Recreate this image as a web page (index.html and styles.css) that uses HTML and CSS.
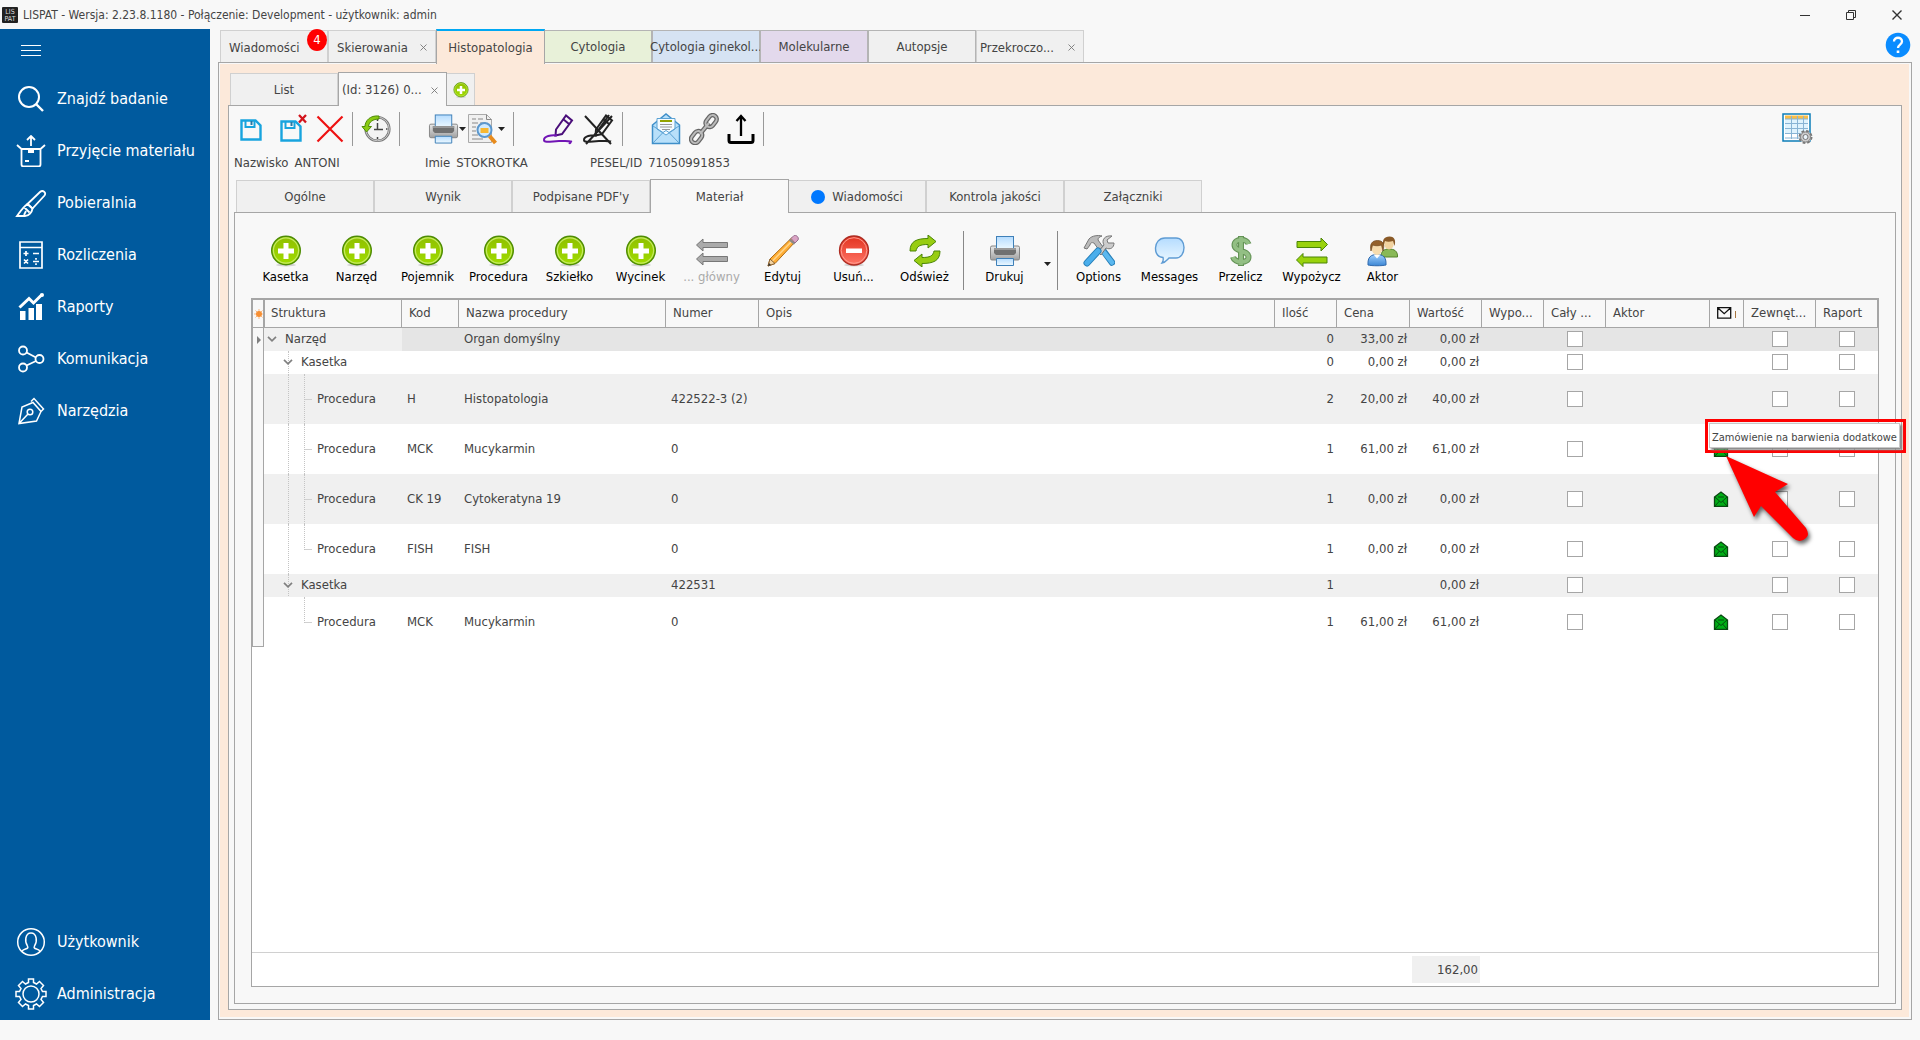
FILE: index.html
```
<!DOCTYPE html>
<html lang="pl">
<head>
    <meta charset="UTF-8">
    <meta name="viewport" content="width=device-width, initial-scale=1.0">
    <title>LISPAT</title>
    <link rel="stylesheet" href="styles.css">
</head>
<body>
    <!-- Shared icons -->
    <svg class="sprite" width="0" height="0" aria-hidden="true">
        <defs>
            <linearGradient id="green" x1="0" y1="0" x2="0" y2="1"><stop offset="0" stop-color="#8fbf00"/><stop offset="1" stop-color="#a0dc00"/></linearGradient>
            <linearGradient id="red" x1="0" y1="0" x2="0" y2="1"><stop offset="0" stop-color="#e2321f"/><stop offset="1" stop-color="#ff7566"/></linearGradient>
            <linearGradient id="sky" x1="0" y1="0" x2="0" y2="1"><stop offset="0" stop-color="#b5dcff"/><stop offset="1" stop-color="#eef9ff"/></linearGradient>
            <linearGradient id="metal" x1="0" y1="0" x2="0" y2="1"><stop offset="0" stop-color="#e8e8e8"/><stop offset="1" stop-color="#a0a0a0"/></linearGradient>
            <linearGradient id="blue" x1="0" y1="0" x2="0" y2="1"><stop offset="0" stop-color="#9fd0ff"/><stop offset="1" stop-color="#3c86d4"/></linearGradient>
        </defs>
        <symbol id="i-plus" viewBox="0 0 32 32">
            <ellipse cx="16" cy="30" rx="10" ry="1.5" fill="#000" opacity=".15"/>
            <circle cx="16" cy="15.5" r="14.3" fill="url(#green)" stroke="#4e8c05" stroke-width="1.4"/>
            <circle cx="16" cy="15.5" r="12.6" fill="none" stroke="#c4ea62" stroke-width="1.2"/>
            <path d="M13.5 8h5v5.5H24v5h-5.500V24h-5v-5.500H8v-5h5.500z" fill="#fff"/>
        </symbol>
        <symbol id="i-printer" viewBox="0 0 32 32">
            <rect x="1.500" y="11" width="29" height="14" rx="1.500" fill="url(#metal)" stroke="#858585"/>
            <rect x="7.500" y="1.500" width="17" height="13" fill="url(#sky)" stroke="#3f80b8"/>
            <path d="M5 13h22v5l-2 2H7l-2-2z" fill="#707070"/>
            <path d="M5 13h22v2H5z" fill="#999"/>
            <path d="M7.500 23.500h17v7h-17z" fill="url(#sky)" stroke="#3f80b8"/>
        </symbol>
        <symbol id="i-save" viewBox="0 0 22 22">
            <path d="M1.500 1.500h14l5 5v14h-19z" fill="none" stroke="#18a4de" stroke-width="2.400"/>
            <path d="M5.500 2v6h9V2" fill="none" stroke="#18a4de" stroke-width="2"/>
            <path d="M10.500 2h2v4h-2z" fill="#2578a5"/>
        </symbol>
        <symbol id="i-mail" viewBox="0 0 16 16">
            <path d="M1.500 6 8 1l6.500 5v9.500h-13z" fill="#00ae16" stroke="#0a4812" stroke-width="1.300"/>
            <path d="m2 6 6 5.500L14 6M2 15l4.500-5M14 15l-4.500-5M5 6h6" fill="none" stroke="#064a10"/>
        </symbol>
        <symbol id="i-chevron" viewBox="0 0 10 6"><path d="m1 .8 4 4 4-4" fill="none" stroke="#808080" stroke-width="1.700"/></symbol>
        <symbol id="i-drop" viewBox="0 0 7 4"><path d="M0 0h7L3.500 4z" fill="#222"/></symbol>
        <symbol id="i-close" viewBox="0 0 7 7"><path d="m.5.500 6 6m0-6-6 6" stroke="#777" stroke-width=".9"/></symbol>
    </svg>

    <header class="titlebar">
        <svg class="logo" viewBox="0 0 16 16" aria-hidden="true">
            <rect width="16" height="16" rx="1" fill="#222"/>
            <text x="8" y="7" class="logo-text">LIS</text>
            <text x="8" y="14" class="logo-text">PAT</text>
        </svg>
        <span class="title">LISPAT - Wersja: 2.23.8.1180 - Połączenie: Development - użytkownik: admin</span>
        <div class="window-buttons">
            <button type="button" aria-label="Minimalizuj"><svg width="10" height="10"><path d="M0 5.500h10" stroke="#333"/></svg></button>
            <button type="button" aria-label="Przywróć"><svg width="10" height="10" fill="none" stroke="#333"><path d="M.5 2.500h7v7h-7zM2.500 2V.5h7v7H8"/></svg></button>
            <button type="button" aria-label="Zamknij"><svg width="10" height="10"><path d="m.5.500 9 9m0-9-9 9" stroke="#333" stroke-width="1.400"/></svg></button>
        </div>
    </header>

    <div class="app">
        <nav class="sidebar">
            <button type="button" class="burger" aria-label="Menu"><svg width="20" height="12"><path d="M0 .5h20M0 5.500h20M0 10.500h20" stroke="#fff"/></svg></button>
            <a href="#" class="nav-item">
                <svg width="32" height="32" viewBox="0 0 32 32" fill="none" stroke="#fff" stroke-width="2"><circle cx="14" cy="14" r="10"/><path d="m21 21 7 7" stroke-width="2.400"/></svg>
                Znajdź badanie</a>
            <a href="#" class="nav-item">
                <svg width="32" height="32" viewBox="0 0 32 32" fill="none" stroke="#fff" stroke-width="1.800"><path d="M6.500 14v15.500a2 2 0 0 0 2 2h15a2 2 0 0 0 2-2V14zL2 10M25.500 14 30 10M16 11V1M12 5l4-4 4 4M10 26h4"/><path d="M13 14h6v4h-6z" fill="#fff" stroke="none"/></svg>
                Przyjęcie materiału</a>
            <a href="#" class="nav-item">
                <svg width="32" height="32" viewBox="0 0 32 32" fill="none" stroke="#fff" stroke-width="1.800"><path d="M12.500 17 25 5c3-2.500 6.500.5 4.500 3.500L17.500 21.500z"/><path d="M2 29h8c4 0 7-4 7.500-7.500L12.500 17C8 20 5 25 2 29zM9.500 20.500l5 5M9 28l2-4"/></svg>
                Pobieralnia</a>
            <a href="#" class="nav-item">
                <svg width="32" height="32" viewBox="0 0 32 32" fill="none" stroke="#fff" stroke-width="1.700"><path d="M5 3h22v26H5zM5 8.500h22M8.500 14.500h5M11 12v5M18 14.500h6M9 20.500l4 4m0-4-4 4M18 22.500h6M21 19v1.700M21 24.300V26"/></svg>
                Rozliczenia</a>
            <a href="#" class="nav-item">
                <svg width="32" height="32" viewBox="0 0 32 32" fill="#fff"><path d="M5 20h5.500v9H5zM13.500 17H19v12h-5.500zM21 13h6v16h-6z"/><path d="m4.500 16.500 9.500-9 4.500 4.500L27 3.500" fill="none" stroke="#fff" stroke-width="3"/><circle cx="27" cy="4" r="2"/></svg>
                Raporty</a>
            <a href="#" class="nav-item">
                <svg width="32" height="32" viewBox="0 0 32 32" fill="none" stroke="#fff" stroke-width="1.800"><circle cx="8" cy="7.500" r="4"/><circle cx="8" cy="24.500" r="4"/><circle cx="24.500" cy="16" r="4"/><path d="m11.500 9.500 9.500 5M11.500 22.500l9.500-4.500"/></svg>
                Komunikacja</a>
            <a href="#" class="nav-item">
                <svg width="32" height="32" viewBox="0 0 32 32" fill="none" stroke="#fff" stroke-width="1.500"><path d="M4 28.500 7 12l11-4.500 8 9L21.500 26zM4 28.500 13 19M16 6.500l3-3L28.500 14l-3 3"/><circle cx="15" cy="17" r="2.800"/></svg>
                Narzędzia</a>
            <div class="nav-bottom">
                <a href="#" class="nav-item">
                    <svg width="32" height="32" viewBox="0 0 32 32" fill="none" stroke="#fff" stroke-width="1.500"><circle cx="16" cy="16" r="13.300"/><path d="M12.500 20c-3-4-2.500-13 3.500-13s6.500 9 3.500 13c-1 2 0 2.500 2 3 1.500.4 3 1 3.500 2.500M12.500 20c1 2 0 2.500-2 3-1.500.4-3 1-3.500 2.500"/></svg>
                    Użytkownik</a>
                <a href="#" class="nav-item">
                    <svg width="32" height="32" viewBox="0 0 32 32" fill="none" stroke="#fff" stroke-width="1.500"><circle cx="16" cy="16" r="8"/><path d="M13.500 1h5v3.500l3 1.500 3-2.500 4 4L26 10.500l1.500 3H31v5h-3.500l-1.500 3 2.500 3-4 4-3-2.500-3 1.500V31h-5v-3.500l-3-1.500-3 2.500-4-4L6 21.500l-1.500-3H1v-5h3.500l1.500-3L3.500 7.500l4-4 3 2.500 3-1.500z"/></svg>
                    Administracja</a>
            </div>
        </nav>

        <main class="main">
            <div class="tabs">
                <button type="button" class="tab tab-left">Wiadomości<span class="badge">4</span></button>
                <button type="button" class="tab tab-left">Skierowania<svg class="close"><use href="#i-close"/></svg></button>
                <button type="button" class="tab histo active">Histopatologia</button>
                <button type="button" class="tab cyto">Cytologia</button>
                <button type="button" class="tab gine">Cytologia ginekol...</button>
                <button type="button" class="tab mole">Molekularne</button>
                <button type="button" class="tab auto">Autopsje</button>
                <button type="button" class="tab tab-left tab-long">Przekroczo...<svg class="close"><use href="#i-close"/></svg></button>
                <button type="button" class="help" aria-label="Pomoc">
                    <svg width="26" height="26" viewBox="0 0 26 26" fill="none"><circle cx="13" cy="13" r="12.300" fill="#0a8cff"/><path d="M9 9.500c0-5 8-5 8 0 0 3-4 3.200-4 6.500" stroke="#fff" stroke-width="2.300"/><path d="M11.700 18.500h2.600v2.500h-2.600z" fill="#fff"/></svg>
                </button>
            </div>

            <div class="frame">
                <div class="module">
                    <div class="tabs subtabs">
                        <button type="button" class="tab">List</button>
                        <button type="button" class="tab tab-left active">(Id: 3126) 0...<svg class="close"><use href="#i-close"/></svg></button>
                        <button type="button" class="tab tab-add" aria-label="Dodaj"><svg width="16" height="16"><use href="#i-plus"/></svg></button>
                    </div>

                    <section class="record">
                        <div class="toolbar">
                            <button type="button" class="tool save" aria-label="Zapisz"><svg width="22" height="22"><use href="#i-save"/></svg></button>
                            <button type="button" class="tool save-close" aria-label="Zapisz i zamknij"><svg width="28" height="30" viewBox="0 0 28 30"><use href="#i-save" x="0" y="6" width="22" height="22"/><path d="m19 1 7 7.500m0-7.500-7 7.500" stroke="#d3141c" stroke-width="2.300"/></svg></button>
                            <button type="button" class="tool" aria-label="Zamknij"><svg width="28" height="28"><path d="m1.500 1.500 25 25m0-25-25 25" stroke="#ee1111" stroke-width="2.200"/></svg></button>
                            <span class="sep"></span>
                            <button type="button" class="tool" aria-label="Historia"><svg width="30" height="30" viewBox="0 0 30 30"><circle cx="16.500" cy="15" r="11.800" fill="#f4f4f4" stroke="#777" stroke-width="2.600"/><circle cx="16.500" cy="15" r="11.800" fill="none" stroke="#ccc"/><path d="M16.500 9v6.500H22M16.500 15.500H13M16.500 5v2M16.500 23v2M25 15h1.500" fill="none" stroke="#444" stroke-width="1.500"/><path d="M18 2C9 1 4 7 4 12.500H1L5.500 18l5-5.500h-3C8 8 12 5 18 5z" fill="#8bcb12" stroke="#4e8c05"/></svg></button>
                            <span class="sep"></span>
                            <span class="gap"></span>
                            <button type="button" class="tool drop" aria-label="Drukuj"><svg width="31" height="32"><use href="#i-printer"/></svg><svg width="7" height="4"><use href="#i-drop"/></svg></button>
                            <button type="button" class="tool drop" aria-label="Podgląd"><svg width="31" height="32" viewBox="0 0 31 32"><path d="M1.500 1.500h18l5 5v23h-23z" fill="#f0f0f0" stroke="#aaa"/><path d="M19.500 1.500v5h5M5 6h4m2 0h5M5 10h6m2 0h6M5 14h4M5 18h4M5 22h6M5 26h11" fill="none" stroke="#888"/><circle cx="17.500" cy="17" r="7" fill="#cfeaff" stroke="#5b97cd" stroke-width="2"/><path d="M13.500 15h8v5h-8z" fill="#f7b731"/><path d="m22.500 23 6 7" stroke="#e78b1d" stroke-width="4"/></svg><svg width="7" height="4"><use href="#i-drop"/></svg></button>
                            <span class="sep"></span>
                            <span class="gap"></span>
                            <button type="button" class="tool" aria-label="Podpisz"><svg width="32" height="32" viewBox="0 0 32 32" fill="none" stroke="#4a0e7a" stroke-width="2"><path d="m14 16.500 10-14 6 5L20 21l-6.500 1.500zM21 6l6 5"/><path d="M15 22.500c-6-1-13 1-13 4.500s9 1 15 1c5 0 10-.5 12 .5-1 2-1 2-2 1" stroke="#7115b5"/></svg></button>
                            <button type="button" class="tool" aria-label="Usuń podpis"><svg width="32" height="32" viewBox="0 0 32 32" fill="none" stroke="#222" stroke-width="2"><path d="m14 16.500 10-14 6 5L20 21l-6.500 1.500zM21 6l6 5"/><path d="M15 22.500c-6-1-13 1-13 4.500s9 1 15 1c5 0 10-.5 12 .5M3 3l26 28M30 3 4 31M27 2 15 19"/></svg></button>
                            <span class="sep"></span>
                            <span class="gap"></span>
                            <button type="button" class="tool" aria-label="Wiadomość"><svg width="30" height="32" viewBox="0 0 30 32" fill="none"><path d="M1.500 12 15 1l13.500 11v18.500h-27z" fill="#b8e0fa" stroke="#3f8fc9" stroke-width="1.500"/><path d="M6 5.500h18V16l-9 6-9-6z" fill="#f4fbff" stroke="#5ba2d4"/><path d="M9 8h12" stroke="#92a300" stroke-width="2"/><path d="M9 11.500h12M9 14h12M11 16.500h8" stroke="#999"/><path d="m2 13 10 6.500L2 30M28 13l-10 6.500L28 30M12 19.500l3-2 3 2" stroke="#5ba2d4"/></svg></button>
                            <button type="button" class="tool" aria-label="Połącz"><svg width="30" height="32" viewBox="0 0 30 32" fill="none"><g stroke="#666" stroke-width="4.500"><rect x="1" y="-4" width="13" height="8" rx="4" transform="translate(17.500 14) rotate(-52)"/><rect x="1" y="-4" width="13" height="8" rx="4" transform="translate(3 30) rotate(-52)"/><path d="m11 21 9-11"/></g><g stroke="#bbb" stroke-width="2"><rect x="1" y="-4" width="13" height="8" rx="4" transform="translate(17.500 14) rotate(-52)"/><rect x="1" y="-4" width="13" height="8" rx="4" transform="translate(3 30) rotate(-52)"/><path d="m11 21 9-11"/></g></svg></button>
                            <button type="button" class="tool" aria-label="Wyślij"><svg width="28" height="32" viewBox="0 0 28 32" fill="none" stroke="#000" stroke-width="3"><path d="M14 23V3M9.500 8 14 3l4.500 5" stroke-width="2.300"/><path d="M2 21v6.500c0 1.500.5 2 2 2h20c1.500 0 2-.5 2-2V21"/></svg></button>
                            <span class="sep"></span>
                            <button type="button" class="tool layout" aria-label="Układ"><svg width="31" height="32" viewBox="0 0 31 32" fill="none"><path d="M1 1h27v27H1z" fill="#fff" stroke="#0d7db8" stroke-width="1.500"/><path d="M3 6h23v15H3z" fill="#dff3fd"/><path d="M3 2.500h23V6H3z" fill="#f9bd45"/><path d="M3 6h23M3 10.500h23M3 15.500h23M3 20.500h23M3 25h23M9.500 3v23M15.500 3v23M21.500 3v23" stroke="#88b4d4"/><circle cx="23.500" cy="24" r="6" fill="#ccc" stroke="#777" stroke-width="2" stroke-dasharray="2.700 2"/><circle cx="23.500" cy="24" r="5" fill="#ccc" stroke="#888"/><circle cx="23.500" cy="24" r="2.500" fill="#eaf4fa" stroke="#777"/></svg></button>
                        </div>

                        <dl class="patient">
                            <div><dt>Nazwisko</dt><dd>ANTONI</dd></div>
                            <div><dt>Imie</dt><dd>STOKROTKA</dd></div>
                            <div><dt>PESEL/ID</dt><dd>71050991853</dd></div>
                        </dl>

                        <div class="tabs cardtabs">
                            <button type="button" class="tab">Ogólne</button>
                            <button type="button" class="tab">Wynik</button>
                            <button type="button" class="tab">Podpisane PDF'y</button>
                            <button type="button" class="tab active">Materiał</button>
                            <button type="button" class="tab"><span class="dot"></span>Wiadomości</button>
                            <button type="button" class="tab">Kontrola jakości</button>
                            <button type="button" class="tab">Załączniki</button>
                        </div>

                        <div class="card">
                            <div class="ribbon">
                                <button type="button" class="action"><svg><use href="#i-plus"/></svg>Kasetka</button>
                                <button type="button" class="action"><svg><use href="#i-plus"/></svg>Narzęd</button>
                                <button type="button" class="action"><svg><use href="#i-plus"/></svg>Pojemnik</button>
                                <button type="button" class="action"><svg><use href="#i-plus"/></svg>Procedura</button>
                                <button type="button" class="action"><svg><use href="#i-plus"/></svg>Szkiełko</button>
                                <button type="button" class="action"><svg><use href="#i-plus"/></svg>Wycinek</button>
                                <button type="button" class="action" disabled><svg viewBox="0 0 32 32" fill="#aaa" stroke="#777"><path d="M.5 10 7 4v3.500h24.500v5H7V16zM.5 24 7 18v3.500h24.500v5H7V30z"/></svg>... główny</button>
                                <button type="button" class="action"><svg viewBox="0 0 32 32"><path d="m1 31 2-7L24.500 3l4 3.500L8 28.500z" fill="#ffae35" stroke="#b06b12"/><path d="m5.500 26 20-20.500" stroke="#ffd58c" stroke-width="1.500"/><path d="m1 31 2-7 5 4.500z" fill="#f2d3a2" stroke="#8a6334"/><path d="m1 31 1-3L4 30z" fill="#333"/><path d="m24 3.500 3-3c2-1 5.500 2 4 4.500l-3 3z" fill="#d9a3c4" stroke="#946c8c"/><path d="m22.500 4.500 5 4.500" stroke="#888" stroke-width="2"/></svg>Edytuj</button>
                                <button type="button" class="action"><svg viewBox="0 0 32 32"><ellipse cx="16" cy="30" rx="10" ry="1.500" opacity=".15"/><circle cx="16" cy="15.500" r="14.500" fill="url(#red)" stroke="#ad2c22" stroke-width="1.300"/><circle cx="16" cy="15.500" r="12.800" fill="none" stroke="#ff9b8f"/><rect x="8" y="13.500" width="16" height="4.500" fill="#fff"/></svg>Usuń...</button>
                                <button type="button" class="action"><svg viewBox="0 0 32 32" fill="#98cd12" stroke="#4a8506"><path d="M1 16C1 6 8 3.500 19 3.500V0l8 6.500-8 6.500V9.500C11 9.500 8 11 7 16z"/><path d="M31 16c0 10-7 12.500-18 12.500V32l-8-6.500L13 19v3.500c8 0 11-1.500 12-6.500z"/></svg>Odśwież</button>
                                <span class="sep"></span>
                                <button type="button" class="action print"><svg><use href="#i-printer"/></svg>Drukuj</button>
                                <button type="button" class="more" aria-label="Więcej"><svg width="7" height="4"><use href="#i-drop"/></svg></button>
                                <span class="sep"></span>
                                <button type="button" class="action"><svg viewBox="0 0 32 32"><path d="M19 14 29 27.500" stroke="#267fb8" stroke-width="6.500" stroke-linecap="round"/><path d="m20 16 9 11.500" stroke="#5bb8ef" stroke-width="4.500" stroke-linecap="round"/><path d="M1 13 6 4c3-3.500 9-4 13-3-3 1-4 2-4 4l5 7-4 3-5-7c-2-1-4 0-4 2l-3 4z" fill="#bbb" stroke="#777"/><path d="M15 17 21 10c-3-5 1-10 8-9l-5 4 1 3h6c0 5-4 7-8 5l-5 7z" fill="#ccc" stroke="#777"/><path d="M4 28 15 16" stroke="#267fb8" stroke-width="7" stroke-linecap="round"/><path d="M4 28 15 16" stroke="#4aaeec" stroke-width="5" stroke-linecap="round"/></svg>Options</button>
                                <button type="button" class="action"><svg viewBox="0 0 32 32"><path d="M11 3h11c5 0 8 4 8 9.500s-3 10.500-8 10.500h-7c-2 2-3.500 4.500-7 5 1.500-2 1.500-3.500 1-5.500C4 22 1.500 18 1.500 13S5 3 11 3z" fill="url(#sky)" stroke="#5f9cd4" stroke-width="1.400"/></svg>Messages</button>
                                <button type="button" class="action"><svg viewBox="0 0 32 32" fill="none"><path d="M16 1v30M23.500 9C22 3.500 9.500 3 9.500 10c0 7 14 5 14 12 0 7-14 6-15.500 0" stroke="#649356" stroke-width="6"/><path d="M16 2v28M23.500 9C22 3.500 9.500 3 9.500 10c0 7 14 5 14 12 0 7-14 6-15.500 0" stroke="#93bf84" stroke-width="3.800"/></svg>Przelicz</button>
                                <button type="button" class="action"><svg viewBox="0 0 32 32" fill="#99d20c" stroke="#4a8506"><path d="M31.500 9.500 25 3v3.500H1v6h24V16zM.5 25 7 18.500V22h24v6H7v3.500z"/></svg>Wypożycz</button>
                                <button type="button" class="action"><svg viewBox="0 0 32 32"><path d="M14 22c0-6 3-8 8-8s9 2 8.500 8z" fill="#89b957" stroke="#55832d"/><ellipse cx="22" cy="8.500" rx="4.800" ry="6" fill="#f2d3a0"/><path d="M16.500 11C15 5 17 1.500 22.500 1.500S29 6 27.500 11L26 6c-3 1-6 1-8 0z" fill="#8a5a28"/><path d="M1 30c-.5-8 3-10.500 9-10.500s9.500 2.500 9 10.500c-4 1-14 1-18 0z" fill="url(#blue)" stroke="#2f69ad"/><path d="m6.500 19.500 3.500 4 3.500-4z" fill="#fff"/><ellipse cx="10" cy="13.500" rx="5.300" ry="6.500" fill="#f7dcae"/><path d="M4 16C2.500 9 5 5.500 10.500 5.500S18 9 16 16l-1.500-6c-3 1-6 1-9 0z" fill="#94612c" stroke="#6c431a" stroke-width=".7"/></svg>Aktor</button>
                            </div>

                            <div class="grid">
                                <table>
                                    <colgroup>
                                        <col class="c-ind"><col class="c-struct"><col class="c-kod"><col class="c-nazwa"><col class="c-numer"><col>
                                        <col class="c-small"><col class="c-cena"><col class="c-wide"><col class="c-small"><col class="c-small"><col class="c-aktor"><col class="c-mail"><col class="c-wide"><col class="c-small">
                                    </colgroup>
                                    <thead>
                                        <tr>
                                            <th class="ind"><svg width="10" height="10" viewBox="0 0 10 10"><path d="M5 0v10M0 5h10M1.500 1.500l7 7m0-7-7 7" stroke="#f9b983"/><circle cx="5" cy="5" r="3" fill="#f78f33"/></svg></th>
                                            <th class="first">Struktura</th>
                                            <th>Kod</th>
                                            <th>Nazwa procedury</th>
                                            <th>Numer</th>
                                            <th>Opis</th>
                                            <th>Ilość</th>
                                            <th>Cena</th>
                                            <th>Wartość</th>
                                            <th>Wypo...</th>
                                            <th>Cały ...</th>
                                            <th>Aktor</th>
                                            <th aria-label="Zamówienie"><svg width="20" height="13" viewBox="0 0 20 13" fill="none"><path d="M.7.7h13v10.500H.7zm0 0 6.500 6 6.500-6" stroke="#111" stroke-width="1.300"/><path d="M18.500 4v7" stroke="#a8753f"/></svg></th>
                                            <th>Zewnęt...</th>
                                            <th>Raport</th>
                                        </tr>
                                    </thead>
                                    <tbody>
                                        <tr class="group selected">
                                            <td class="ind"><svg width="5" height="8"><path d="M0 0v8l4-4z" fill="#808080"/></svg></td>
                                            <td class="struct"><div class="tree"><svg class="chevron"><use href="#i-chevron"/></svg>Narzęd</div></td>
                                            <td></td><td>Organ domyślny</td><td></td><td></td>
                                            <td class="num">0</td><td class="num">33,00 zł</td><td class="num">0,00 zł</td><td></td>
                                            <td class="check"><input type="checkbox" aria-label="Cały"></td><td></td><td></td>
                                            <td class="check"><input type="checkbox" aria-label="Zewnętrzne"></td>
                                            <td class="check"><input type="checkbox" aria-label="Raport"></td>
                                        </tr>
                                        <tr class="group">
                                            <td class="ind"></td>
                                            <td class="struct"><div class="tree"><span class="guide node"><svg class="chevron"><use href="#i-chevron"/></svg></span>Kasetka</div></td>
                                            <td></td><td></td><td></td><td></td>
                                            <td class="num">0</td><td class="num">0,00 zł</td><td class="num">0,00 zł</td><td></td>
                                            <td class="check"><input type="checkbox" aria-label="Cały"></td><td></td><td></td>
                                            <td class="check"><input type="checkbox" aria-label="Zewnętrzne"></td>
                                            <td class="check"><input type="checkbox" aria-label="Raport"></td>
                                        </tr>
                                        <tr>
                                            <td class="ind"></td>
                                            <td class="struct"><div class="tree"><span class="guide"></span><span class="guide branch"></span>Procedura</div></td>
                                            <td>H</td><td>Histopatologia</td><td>422522-3 (2)</td><td></td>
                                            <td class="num">2</td><td class="num">20,00 zł</td><td class="num">40,00 zł</td><td></td>
                                            <td class="check"><input type="checkbox" aria-label="Cały"></td><td></td><td></td>
                                            <td class="check"><input type="checkbox" aria-label="Zewnętrzne"></td>
                                            <td class="check"><input type="checkbox" aria-label="Raport"></td>
                                        </tr>
                                        <tr>
                                            <td class="ind"></td>
                                            <td class="struct"><div class="tree"><span class="guide"></span><span class="guide branch"></span>Procedura</div></td>
                                            <td>MCK</td><td>Mucykarmin</td><td>0</td><td></td>
                                            <td class="num">1</td><td class="num">61,00 zł</td><td class="num">61,00 zł</td><td></td>
                                            <td class="check"><input type="checkbox" aria-label="Cały"></td><td></td>
                                            <td class="mail">
                                                <svg class="envelope"><use href="#i-mail"/></svg>
                                                <div class="callout"><div class="tooltip" role="tooltip">Zamówienie na barwienia dodatkowe</div></div>
                                                <svg class="pointer" width="90" height="90" viewBox="0 0 90 90"><path d="M3 3 65 31 52 39 83 75Q87 82 83 85Q77 91 70 85L38 53 31 64Z" fill="#f00"/></svg>
                                            </td>
                                            <td class="check"><input type="checkbox" aria-label="Zewnętrzne"></td>
                                            <td class="check"><input type="checkbox" aria-label="Raport"></td>
                                        </tr>
                                        <tr>
                                            <td class="ind"></td>
                                            <td class="struct"><div class="tree"><span class="guide"></span><span class="guide branch"></span>Procedura</div></td>
                                            <td>CK 19</td><td>Cytokeratyna 19</td><td>0</td><td></td>
                                            <td class="num">1</td><td class="num">0,00 zł</td><td class="num">0,00 zł</td><td></td>
                                            <td class="check"><input type="checkbox" aria-label="Cały"></td><td></td>
                                            <td class="mail"><svg class="envelope"><use href="#i-mail"/></svg></td>
                                            <td class="check"><input type="checkbox" aria-label="Zewnętrzne"></td>
                                            <td class="check"><input type="checkbox" aria-label="Raport"></td>
                                        </tr>
                                        <tr>
                                            <td class="ind"></td>
                                            <td class="struct"><div class="tree"><span class="guide"></span><span class="guide branch last"></span>Procedura</div></td>
                                            <td>FISH</td><td>FISH</td><td>0</td><td></td>
                                            <td class="num">1</td><td class="num">0,00 zł</td><td class="num">0,00 zł</td><td></td>
                                            <td class="check"><input type="checkbox" aria-label="Cały"></td><td></td>
                                            <td class="mail"><svg class="envelope"><use href="#i-mail"/></svg></td>
                                            <td class="check"><input type="checkbox" aria-label="Zewnętrzne"></td>
                                            <td class="check"><input type="checkbox" aria-label="Raport"></td>
                                        </tr>
                                        <tr class="group">
                                            <td class="ind"></td>
                                            <td class="struct"><div class="tree"><span class="guide node"><svg class="chevron"><use href="#i-chevron"/></svg></span>Kasetka</div></td>
                                            <td></td><td></td><td>422531</td><td></td>
                                            <td class="num">1</td><td></td><td class="num">0,00 zł</td><td></td>
                                            <td class="check"><input type="checkbox" aria-label="Cały"></td><td></td><td></td>
                                            <td class="check"><input type="checkbox" aria-label="Zewnętrzne"></td>
                                            <td class="check"><input type="checkbox" aria-label="Raport"></td>
                                        </tr>
                                        <tr>
                                            <td class="ind end"></td>
                                            <td class="struct"><div class="tree"><span class="guide empty"></span><span class="guide branch last"></span>Procedura</div></td>
                                            <td>MCK</td><td>Mucykarmin</td><td>0</td><td></td>
                                            <td class="num">1</td><td class="num">61,00 zł</td><td class="num">61,00 zł</td><td></td>
                                            <td class="check"><input type="checkbox" aria-label="Cały"></td><td></td>
                                            <td class="mail"><svg class="envelope"><use href="#i-mail"/></svg></td>
                                            <td class="check"><input type="checkbox" aria-label="Zewnętrzne"></td>
                                            <td class="check"><input type="checkbox" aria-label="Raport"></td>
                                        </tr>
                                    </tbody>
                                </table>
                                <div class="summary"><span class="total">162,00</span></div>
                            </div>
                        </div>
                    </section>
                </div>
            </div>
        </main>
    </div>
</body>
</html>
```
FILE: styles.css
```
* {
    box-sizing: border-box;
}

body {
    margin: 0;
    height: 100vh;
    display: flex;
    flex-direction: column;
    padding-bottom: 20px;
    background: #f8f8f8;
    color: #444;
    font-family: "DejaVu Sans Condensed", "Noto Sans", sans-serif;
    font-size: 13px;
    line-height: 16px;
}

button {
    font: inherit;
    color: inherit;
    background: none;
    border: none;
    padding: 0;
}

svg {
    display: block;
    flex-shrink: 0;
}

.sprite {
    position: absolute;
}

/* Title bar */
.titlebar {
    height: 29px;
    flex-shrink: 0;
    display: flex;
    align-items: center;
    padding-left: 2px;
    gap: 5px;
    font-size: 12px;
}

.logo {
    width: 16px;
    height: 16px;
}

.logo-text {
    font-size: 7px;
    fill: #ddd;
    text-anchor: middle;
}

.window-buttons {
    display: flex;
    margin-left: auto;
}

.window-buttons button {
    width: 46px;
    height: 28px;
    display: flex;
    align-items: center;
    justify-content: center;
}

.app {
    flex: 1;
    display: flex;
    min-height: 0;
}

/* Sidebar */
.sidebar {
    width: 210px;
    flex-shrink: 0;
    display: flex;
    flex-direction: column;
    background: #005a9e;
}

.burger {
    height: 44px;
    padding-left: 21px;
    text-align: left;
}

.nav-item {
    height: 52px;
    display: flex;
    align-items: center;
    gap: 10px;
    padding-left: 15px;
    color: #fff;
    font-size: 16px;
    text-decoration: none;
    white-space: nowrap;
}

.nav-bottom {
    margin-top: auto;
}

/* Tabs */
.main {
    flex: 1;
    min-width: 0;
    display: flex;
    flex-direction: column;
    margin: 0 8px;
}

.tabs {
    display: flex;
    align-items: flex-end;
    height: 33px;
    flex-shrink: 0;
    padding-left: 2px;
    position: relative;
}

.tab {
    width: 108px;
    height: 32px;
    display: flex;
    align-items: center;
    justify-content: center;
    white-space: nowrap;
    background: #f0f0f0;
    border: 1px solid #d0d0d0;
    border-bottom: none;
    position: relative;
}

.tab-left {
    justify-content: space-between;
    padding: 2px 8px 0;
}

.tab-long {
    padding-left: 3px;
}

.tab.active {
    width: 109px;
    height: 34px;
    margin-bottom: -1px;
    margin-right: -1px;
    background: #f8f8f8;
    border-color: #a6a6a6;
    z-index: 1;
}

.tab.histo.active {
    height: 35px;
    margin-bottom: -2px;
    background: #fce9da;
    border-top: 2px solid #00a8f3;
}

.cyto,
.gine,
.mole,
.auto {
    border-color: #b4b4b4;
}

.cyto {
    background: #e8f1d9;
}

.gine {
    background: #d6e3f3;
}

.mole {
    background: #e3d9ec;
}

.close {
    width: 7px;
    height: 7px;
}

.badge {
    position: absolute;
    top: -2px;
    right: 0;
    width: 20px;
    height: 22px;
    line-height: 22px;
    border-radius: 50%;
    background: #f00;
    color: #fff;
    text-align: center;
}

.help {
    margin: 0 1px 4px auto;
}

.frame {
    flex: 1;
    display: flex;
    min-height: 0;
    padding: 1px 2px 2px 1px;
    border: 1px solid #a6a6a6;
}

.module {
    flex: 1;
    min-width: 0;
    display: flex;
    flex-direction: column;
    padding: 8px 7px 7px 8px;
    background: #fce9da;
}

.subtabs .tab,
.cardtabs .tab {
    padding-top: 1px;
}

.subtabs .tab-left {
    padding: 1px 8px 0 3px;
}

.subtabs .tab-add {
    width: 29px;
}

.record {
    flex: 1;
    min-height: 0;
    display: flex;
    flex-direction: column;
    padding: 5px;
    background: #f8f8f8;
    border: 1px solid #a6a6a6;
}

/* Record toolbar */
.toolbar {
    display: flex;
    align-items: center;
    gap: 8px;
    height: 36px;
    flex-shrink: 0;
    padding-left: 6px;
}

.sep {
    width: 1px;
    height: 34px;
    background: #999;
}

.toolbar .gap {
    width: 12px;
}

.tool.save {
    margin: 2px 10px 0 0;
}

.tool.drop {
    display: flex;
    align-items: center;
}

.tool.drop + .tool.drop {
    margin-left: -7px;
}

.tool.layout {
    margin: 0 83px 0 auto;
}

.patient {
    display: flex;
    flex-shrink: 0;
    margin: 0;
    height: 32px;
    align-items: center;
}

.patient div {
    display: flex;
    gap: 6px;
}

.patient div:nth-child(1) {
    width: 191px;
}

.patient div:nth-child(2) {
    width: 165px;
}

.patient dd {
    margin: 0;
}

.cardtabs .tab {
    width: 138px;
}

.cardtabs .tab.active {
    width: 139px;
}

.dot {
    width: 14px;
    height: 14px;
    margin-right: 7px;
    border-radius: 50%;
    background: #0078ff;
}

.card {
    flex: 1;
    min-height: 0;
    display: flex;
    flex-direction: column;
    padding: 16px;
    border: 1px solid #a6a6a6;
}

/* Ribbon */
.ribbon {
    display: flex;
    height: 69px;
    flex-shrink: 0;
    margin-left: -1px;
    color: #000;
}

.ribbon .sep {
    height: 59px;
    margin-top: 2px;
    background: #888;
}

.action {
    width: 71px;
    display: flex;
    flex-direction: column;
    align-items: center;
    gap: 2px;
    padding-top: 6px;
    white-space: nowrap;
}

.action svg {
    width: 32px;
    height: 32px;
}

.action:disabled {
    color: #aaa;
}

.action + .sep {
    margin-left: 3px;
}

.more {
    width: 16px;
    margin-right: 1px;
    padding: 0 4px;
}

.ribbon .sep + .action {
    margin-left: 5px;
}

/* Data grid */
.grid {
    flex: 1;
    display: flex;
    flex-direction: column;
    background: #fff;
    border: 1px solid #a6a6a6;
}

table {
    width: 100%;
    table-layout: fixed;
    border-collapse: separate;
    border-spacing: 0;
}

.c-ind { width: 12px; }
.c-struct { width: 138px; }
.c-kod { width: 57px; }
.c-nazwa { width: 207px; }
.c-numer { width: 93px; }
.c-small { width: 62px; }
.c-cena { width: 73px; }
.c-wide { width: 72px; }
.c-aktor { width: 104px; }
.c-mail { width: 34px; }

th {
    height: 29px;
    padding: 0 0 1px 7px;
    background: #f8f8f8;
    border: 1px solid #a6a6a6;
    border-left: none;
    font-weight: normal;
    text-align: left;
    white-space: nowrap;
    overflow: hidden;
}

th.first {
    padding-left: 6px;
    border-left: 1px solid #a6a6a6;
}

td {
    height: 50px;
    padding: 0 3px 0 5px;
    white-space: nowrap;
}

tr.group td {
    height: 23px;
    padding-bottom: 1px;
}

tbody tr:nth-child(odd) {
    background: #f0f0f0;
}

tbody tr.selected td {
    background: #e5e5e5;
}

tbody tr.selected td.struct {
    background: #f0f0f0;
}

th.ind,
tbody tr td.ind {
    padding: 0 0 0 1px;
    background: #f8f8f8;
    border-left: 1px solid #a6a6a6;
}

tbody tr td.ind {
    padding-left: 4px;
    border-right: 1px solid #a6a6a6;
}

td.ind.end {
    border-bottom: 1px solid #a6a6a6;
}

td.num {
    text-align: right;
}

td.check {
    padding: 0;
    text-align: center;
}

td input {
    appearance: none;
    display: block;
    width: 16px;
    height: 16px;
    margin: 0 auto;
    background: #fff;
    border: 1px solid #a6a6a6;
}

td.struct {
    padding: 0 0 0 3px;
}

.tree {
    display: flex;
    align-items: center;
    height: 50px;
}

.group .tree {
    height: 22px;
}

.chevron {
    width: 10px;
    height: 6px;
    margin-right: 8px;
}

.guide {
    align-self: stretch;
    width: 16px;
    margin-left: 21px;
    border-left: 1px dotted #c4c4c4;
}

.guide + .guide {
    margin-left: 0;
}

.guide.node {
    display: flex;
    align-items: center;
    margin-right: -3px;
}

.guide.node .chevron {
    margin: 0 0 0 -6px;
}

.guide.branch {
    width: 13px;
    background: linear-gradient(90deg, #d0d0d0, #d0d0d0) 0 25px / 7px 1px no-repeat;
}

.guide.last {
    align-self: flex-start;
    height: 26px;
}

.guide.empty {
    border-color: transparent;
}

.mail {
    position: relative;
    padding-left: 3px;
}

.envelope {
    width: 16px;
    height: 16px;
}

/* Highlighted hint over the order icon */
.callout {
    position: absolute;
    z-index: 2;
    top: -5px;
    left: -5px;
    padding: 1px 3px 2px 1px;
    border: 3px solid #f00;
}

.tooltip {
    padding: 6px 2px 1px;
    background: #fff;
    border: 1px solid #c8c8c8;
    box-shadow: 2px 2px 2px #888;
    font-size: 11px;
}

.pointer {
    position: absolute;
    z-index: 3;
    top: 29px;
    left: 13px;
    filter: drop-shadow(2px 3px 2px rgba(0, 0, 0, 0.6));
}

.summary {
    height: 34px;
    margin-top: auto;
    display: flex;
    justify-content: flex-end;
    align-items: center;
    padding-right: 398px;
    border-top: 1px solid #d0d0d0;
}

.total {
    width: 68px;
    padding: 6px 2px 5px 0;
    background: #f0f0f0;
    text-align: right;
}
```
